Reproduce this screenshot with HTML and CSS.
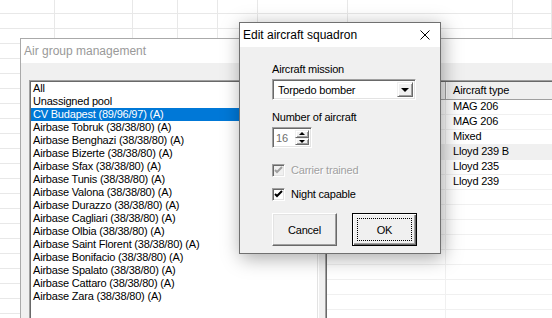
FILE: index.html
```html
<!DOCTYPE html>
<html lang="en">
<head>
  <meta charset="UTF-8">
  <title>Edit aircraft squadron</title>
  <link rel="stylesheet" href="styles.css">
</head>
<body>
  <div class="desktop">
    <div class="sheet">
      <div class="col"></div>
      <div class="col"></div>
      <div class="col"></div>
      <div class="col"></div>
      <div class="col"></div>
      <div class="col"></div>
      <div class="col"></div>
      <div class="col"></div>
    </div>

    <div class="window airgroup">
      <div class="titlebar inactive">Air group management</div>
      <div class="client">
        <div class="listbox">
          <div class="item">All</div>
          <div class="item">Unassigned pool</div>
          <div class="item selected">CV Budapest (89/96/97) (A)</div>
          <div class="item">Airbase Tobruk (38/38/80) (A)</div>
          <div class="item">Airbase Benghazi (38/38/80) (A)</div>
          <div class="item">Airbase Bizerte (38/38/80) (A)</div>
          <div class="item">Airbase Sfax (38/38/80) (A)</div>
          <div class="item">Airbase Tunis (38/38/80) (A)</div>
          <div class="item">Airbase Valona (38/38/80) (A)</div>
          <div class="item">Airbase Durazzo (38/38/80) (A)</div>
          <div class="item">Airbase Cagliari (38/38/80) (A)</div>
          <div class="item">Airbase Olbia (38/38/80) (A)</div>
          <div class="item">Airbase Saint Florent (38/38/80) (A)</div>
          <div class="item">Airbase Bonifacio (38/38/80) (A)</div>
          <div class="item">Airbase Spalato (38/38/80) (A)</div>
          <div class="item">Airbase Cattaro (38/38/80) (A)</div>
          <div class="item">Airbase Zara (38/38/80) (A)</div>
        </div>
        <div class="grid">
          <div class="row head">
            <div class="cell first"></div>
            <div class="cell">Aircraft type</div>
          </div>
          <div class="row"><div class="cell first"></div><div class="cell">MAG 206</div></div>
          <div class="row"><div class="cell first"></div><div class="cell">MAG 206</div></div>
          <div class="row"><div class="cell first"></div><div class="cell">Mixed</div></div>
          <div class="row hot"><div class="cell first"></div><div class="cell">Lloyd 239 B</div></div>
          <div class="row"><div class="cell first"></div><div class="cell">Lloyd 235</div></div>
          <div class="row"><div class="cell first"></div><div class="cell">Lloyd 239</div></div>
          <div class="row"><div class="cell first"></div><div class="cell"></div></div>
          <div class="row"><div class="cell first"></div><div class="cell"></div></div>
          <div class="row"><div class="cell first"></div><div class="cell"></div></div>
          <div class="row"><div class="cell first"></div><div class="cell"></div></div>
          <div class="row"><div class="cell first"></div><div class="cell"></div></div>
          <div class="row"><div class="cell first"></div><div class="cell"></div></div>
          <div class="row"><div class="cell first"></div><div class="cell"></div></div>
          <div class="row"><div class="cell first"></div><div class="cell"></div></div>
          <div class="row"><div class="cell first"></div><div class="cell"></div></div>
          <div class="row"><div class="cell first"></div><div class="cell"></div></div>
        </div>
      </div>
    </div>

    <div class="dialog">
      <div class="titlebar">
        <span>Edit aircraft squadron</span>
        <svg class="close" width="10" height="10" viewBox="0 0 10 10">
          <path d="M0.5 0.5 L9.5 9.5 M9.5 0.5 L0.5 9.5" stroke="#000" stroke-width="1" fill="none"/>
        </svg>
      </div>
      <div class="dlg-body">
        <div class="label">Aircraft mission</div>
        <div class="combo">
          <span class="combo-text">Torpedo bomber</span>
          <span class="drop"><span class="tri-down"></span></span>
        </div>

        <div class="label gap">Number of aircraft</div>
        <div class="spin">
          <span class="spin-text">16</span>
          <span class="spin-btns">
            <span class="spin-btn"><span class="tri-up small"></span></span>
            <span class="spin-btn"><span class="tri-down small"></span></span>
          </span>
        </div>

        <div class="check disabled first-check">
          <span class="box">
            <svg width="9" height="9" viewBox="0 0 9 9"><path d="M1 4 L3 6 L8 1" stroke="#a0a0a0" stroke-width="2" fill="none"/></svg>
          </span>
          <span>Carrier trained</span>
        </div>
        <div class="check">
          <span class="box">
            <svg width="9" height="9" viewBox="0 0 9 9"><path d="M1 4 L3 6 L8 1" stroke="#000" stroke-width="2" fill="none"/></svg>
          </span>
          <span>Night capable</span>
        </div>

        <div class="buttons">
          <button class="btn">Cancel</button>
          <button class="btn default"><span class="focus">OK</span></button>
        </div>
      </div>
    </div>
  </div>
</body>
</html>
```

FILE: styles.css
```css
body {
  margin: 0;
  font-family: 'Liberation Sans', Arial, sans-serif;
  font-size: 11px;
  color: #000;
  background: #fff;
}

.desktop {
  position: relative;
  width: 552px;
  height: 318px;
  overflow: hidden;
  background-color: #fff;
  background-image: repeating-linear-gradient(to bottom, transparent 0 14px, #e8e8e8 14px 15px);
  background-size: 100% 15px;
  background-position: 0 -1px;
}

/* spreadsheet columns behind the windows */
.sheet {
  display: grid;
  grid-template-columns: 55px 78px 45px 40px 40px 90px 165px 1fr;
  height: 100%;
}

.sheet .col {
  border-right: 1px solid #e8e8e8;
}

/* windows */
.window {
  position: absolute;
  box-sizing: border-box;
  background: #f0f0f0;
}

.airgroup {
  left: 20px;
  top: 38px;
  width: 600px;
  height: 300px;
  border: 1px solid #aaaaaa;
}

.titlebar {
  height: 24px;
  background: #fff;
  display: flex;
  align-items: center;
  padding-left: 3px;
  font-size: 12px;
}

.titlebar.inactive {
  color: #999999;
}

.client {
  display: flex;
  gap: 6px;
  padding: 17px 0 0 8px;
}

.listbox,
.grid,
.combo,
.spin,
.box {
  box-sizing: border-box;
  background: #fff;
  border: 1px solid;
  border-color: #a0a0a0 #fff #fff #a0a0a0;
  box-shadow: inset 1px 1px #696969, inset -1px -1px #e3e3e3;
}

.listbox {
  width: 290px;
  height: 260px;
  padding: 1px;
  letter-spacing: -0.2px;
}

.item {
  height: 13px;
  line-height: 13px;
  padding-left: 2px;
  white-space: nowrap;
}

.item.selected {
  background: #0078d7;
  color: #fff;
}

/* report view on the right */
.grid {
  flex: 1;
  height: 260px;
  padding: 1px;
  letter-spacing: -0.2px;
}

.row {
  display: flex;
  height: 14px;
  line-height: 13px;
  border-bottom: 1px solid #f0f0f0;
}

.row.hot {
  background: #f0f0f0;
}

.row.head {
  height: 17px;
  line-height: 16px;
  border-bottom: 1px solid #a0a0a0;
  background: #f0f0f0;
}

.cell {
  padding-left: 7px;
  flex: 1;
}

.cell.first {
  flex: none;
  width: 118px;
  padding: 0;
  border-right: 1px solid #f0f0f0;
}

.head .cell.first {
  border-right: 1px solid #a0a0a0;
  box-shadow: 1px 0 #fff;
}

/* dialog */
.dialog {
  position: absolute;
  left: 239px;
  top: 22px;
  width: 202px;
  box-sizing: border-box;
  border: 1px solid #707070;
  background: #f0f0f0;
  box-shadow: 2px 4px 18px rgba(0, 0, 0, 0.35);
}

.dialog .titlebar {
  justify-content: space-between;
  padding-right: 10px;
}

.dlg-body {
  display: flex;
  flex-direction: column;
  align-items: flex-start;
  padding: 16px 0 7px 32px;
  letter-spacing: -0.2px;
}

.label {
  height: 13px;
  line-height: 13px;
}

.label.gap {
  margin-top: 11px;
}

.combo {
  margin-top: 3px;
  width: 144px;
  height: 21px;
  display: flex;
  align-items: stretch;
  padding: 2px 2px 2px 1px;
}

.combo-text {
  flex: 1;
  line-height: 17px;
  padding-left: 4px;
}

.drop,
.spin-btn {
  box-sizing: border-box;
  background: #f0f0f0;
  border: 1px solid;
  border-color: #f0f0f0 #696969 #696969 #f0f0f0;
  box-shadow: inset 1px 1px #fff, inset -1px -1px #a0a0a0;
  display: flex;
  align-items: center;
  justify-content: center;
}

.drop {
  width: 16px;
}

.tri-down {
  width: 0;
  height: 0;
  border-left: 4px solid transparent;
  border-right: 4px solid transparent;
  border-top: 4px solid #000;
}

.tri-up {
  width: 0;
  height: 0;
  border-left: 4px solid transparent;
  border-right: 4px solid transparent;
  border-bottom: 4px solid #000;
}

.tri-down.small {
  border-left-width: 3px;
  border-right-width: 3px;
  border-top-width: 3px;
}

.tri-up.small {
  border-left-width: 3px;
  border-right-width: 3px;
  border-bottom-width: 3px;
}

.spin {
  margin-top: 3px;
  width: 40px;
  height: 21px;
  display: flex;
  padding: 2px 2px 2px 1px;
}

.spin-text {
  flex: 1;
  line-height: 17px;
  padding-left: 2px;
  color: #6d6d6d;
}

.spin-btns {
  display: flex;
  flex-direction: column;
  width: 14px;
}

.spin-btn {
  flex: 1;
}

.check {
  display: flex;
  align-items: center;
  gap: 6px;
  height: 13px;
  line-height: 13px;
  margin-top: 11px;
}

.check.first-check {
  margin-top: 16px;
}

.box {
  width: 13px;
  height: 13px;
  display: flex;
  align-items: center;
  justify-content: center;
}

.check.disabled {
  color: #a0a0a0;
  text-shadow: 1px 1px #fff;
}

.check.disabled .box {
  background: #f0f0f0;
}

.buttons {
  display: flex;
  gap: 15px;
  margin-top: 12px;
}

.btn {
  width: 65px;
  height: 33px;
  box-sizing: border-box;
  font-family: inherit;
  font-size: 11px;
  letter-spacing: -0.2px;
  color: #000;
  background: #f0f0f0;
  border: 1px solid;
  border-color: #fff #696969 #696969 #fff;
  box-shadow: inset -1px -1px #a0a0a0, inset 1px 1px #e3e3e3;
  padding: 0;
  display: flex;
  align-items: center;
  justify-content: center;
}

.btn.default {
  border: 1px solid #000;
  box-shadow: inset 1px 1px #fff, inset -1px -1px #696969, inset -2px -2px #a0a0a0;
  padding: 4px;
}

.btn .focus {
  flex: 1;
  align-self: stretch;
  display: flex;
  align-items: center;
  justify-content: center;
  border: 1px dotted #000;
}
```
